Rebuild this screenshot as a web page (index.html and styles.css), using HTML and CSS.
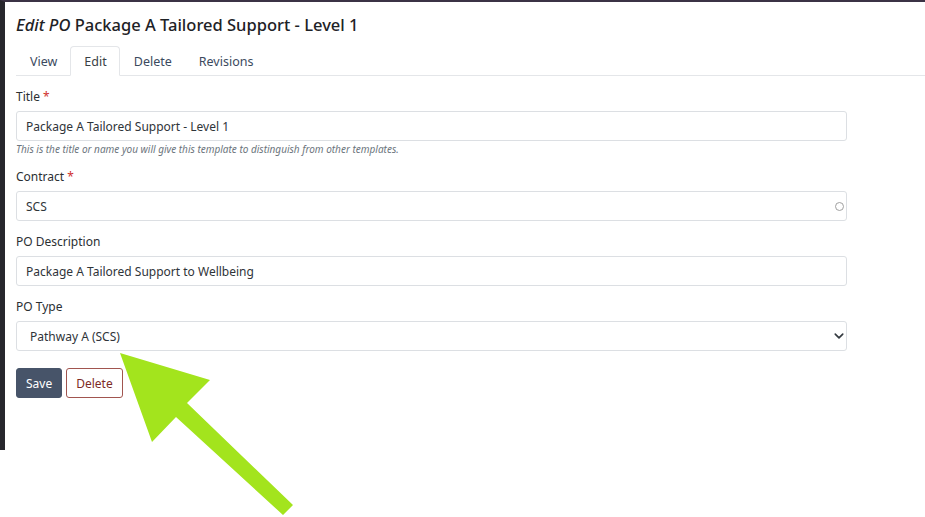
FILE: index.html
```html
<!DOCTYPE html>
<html lang="en">

<head>
    <meta charset="UTF-8">
    <meta name="viewport" content="width=device-width, initial-scale=1.0">
    <title>Edit PO</title>

    <link rel="stylesheet" href="styles.css">
</head>

<body>
    <div class="frame">
        <h1 class="page-title"><em>Edit PO</em> Package A Tailored Support - Level 1</h1>

        <ul class="tabs">
            <li><a href="#">View</a></li>
            <li class="active"><a href="#">Edit</a></li>
            <li><a href="#">Delete</a></li>
            <li><a href="#">Revisions</a></li>
        </ul>

        <form class="po-form">
            <div class="field">
                <label for="title">Title <span class="req">*</span></label>
                <input id="title" type="text" value="Package A Tailored Support - Level 1">
                <small class="help">This is the title or name you will give this template to distinguish from other templates.</small>
            </div>

            <div class="field">
                <label for="contract">Contract <span class="req">*</span></label>
                <div class="autocomplete">
                    <input id="contract" type="text" value="SCS">
                    <span class="throbber"></span>
                </div>
            </div>

            <div class="field">
                <label for="desc">PO Description</label>
                <input id="desc" type="text" value="Package A Tailored Support to Wellbeing">
            </div>

            <div class="field field-last">
                <label for="type">PO Type</label>
                <div class="select-wrap">
                    <select id="type">
                        <option>Pathway A (SCS)</option>
                    </select>
                    <svg class="chevron" width="10" height="10" viewBox="0 0 16 16">
                        <path d="M2 5l6 6 6-6" fill="none" stroke="#343a40" stroke-width="2.6" stroke-linecap="round" stroke-linejoin="round"/>
                    </svg>
                </div>
            </div>

            <div class="actions">
                <button type="button" class="btn btn-save">Save</button>
                <button type="button" class="btn btn-delete">Delete</button>
            </div>
        </form>
    </div>

    <!-- arrow annotation over the screenshot -->
    <svg class="annotation" width="925" height="517" viewBox="0 0 925 517">
        <polygon points="120,353 210,380 187,403 293,505 283,515 176,417 152,442" fill="#a3e41d"/>
    </svg>
</body>

</html>
```

FILE: styles.css
```css
* {
    box-sizing: border-box;
}

body {
    margin: 0;
    background: #fff;
    font-family: "Noto Sans", "Open Sans", sans-serif;
    color: #212529;
    position: relative;
    height: 517px;
    overflow: hidden;
}

/* dark edge of the admin shell on left and top */
.frame {
    height: 450px;
    border-left: 5px solid #27272d;
    border-top: 2px solid #3b3245;
    padding-left: 11px;
}

.page-title {
    margin: 0;
    padding-top: 12px;
    height: 44px;
    font-size: 16.5px;
    font-weight: 500;
    line-height: 22px;
    color: #1e2226;
}

.page-title em {
    font-style: italic;
}

.tabs {
    display: flex;
    list-style: none;
    margin: 0;
    padding: 0;
    border-bottom: 1px solid #e4e6e9;
}

.tabs li {
    margin-bottom: -1px;
}

.tabs a {
    display: block;
    height: 30px;
    padding: 0 12px 0 13px;
    line-height: 29px;
    font-size: 12.5px;
    color: #3b4a5e;
    text-decoration: none;
    border: 1px solid transparent;
    border-radius: 4px 4px 0 0;
}

.tabs .active a {
    color: #3a3f46;
    background: #fff;
    border-color: #e4e6e9 #e4e6e9 #fff;
}

.po-form {
    width: 831px;
    padding-top: 11px;
}

.field {
    margin-bottom: 11px;
}

.field-last {
    margin-bottom: 0;
}

.field label {
    display: block;
    height: 20px;
    line-height: 20px;
    margin-bottom: 4px;
    font-size: 12px;
    color: #2b2f33;
}

.req {
    color: #d0312d;
}

.field input,
.field select {
    display: block;
    width: 100%;
    height: 30px;
    padding: 0 9px;
    font-family: inherit;
    font-size: 12px;
    color: #2f3439;
    background: #fff;
    border: 1px solid #dcdfe3;
    border-radius: 3px;
    outline: none;
}

.help {
    display: block;
    height: 15px;
    line-height: 15px;
    padding-top: 1px;
    font-size: 10px;
    font-style: italic;
    color: #6c757d;
}

.autocomplete,
.select-wrap {
    position: relative;
}

.throbber {
    position: absolute;
    right: 3px;
    top: 11px;
    width: 9px;
    height: 9px;
    border: 1.5px solid #a0a0a0;
    border-radius: 50%;
}

.select-wrap select {
    appearance: none;
    padding-left: 13px;
}

.chevron {
    position: absolute;
    right: 3px;
    top: 10px;
}

.actions {
    display: flex;
    gap: 4px;
    padding-top: 17px;
}

.btn {
    height: 30px;
    padding: 0 9px;
    font-family: inherit;
    font-size: 12px;
    border-radius: 3px;
    cursor: pointer;
}

.btn-save {
    background: #475469;
    color: #fff;
    border: 1px solid #475469;
}

.btn-delete {
    background: #fff;
    color: #7d2a26;
    border: 1px solid #a1554f;
}

.annotation {
    position: absolute;
    left: 0;
    top: 0;
    pointer-events: none;
}
```
